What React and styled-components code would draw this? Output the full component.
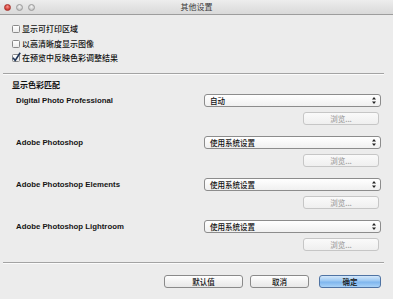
import React from "react";
import styled, { createGlobalStyle } from "styled-components";

const Global = createGlobalStyle`
  html, body { margin: 0; padding: 0; background: #ececec; }
  * { box-sizing: border-box; }
`;

const Window = styled.div`
  width: 393px;
  height: 299px;
  background: #ececec;
  display: flex;
  flex-direction: column;
  font-family: "Noto Sans CJK SC", "Liberation Sans", sans-serif;
  font-weight: 500;
  color: #111;
  overflow: hidden;
`;

const TitleBar = styled.div`
  height: 15px;
  flex: none;
  display: grid;
  grid-template-columns: 1fr auto 1fr;
  align-items: center;
  background: linear-gradient(#ededed, #d9d9d9);
  border-bottom: 1px solid #9d9d9d;
`;

const Lights = styled.div`
  display: flex;
  gap: 5px;
  padding-left: 4px;
`;

const Light = styled.span`
  width: 7px;
  height: 7px;
  border-radius: 50%;
  border: 1px solid ${(p) => (p.$red ? "#a8322c" : "#9a9a9a")};
  background: ${(p) =>
    p.$red
      ? "radial-gradient(circle at 50% 35%, #f59a93, #d9423a 60%, #b62c25)"
      : "radial-gradient(circle at 50% 35%, #f4f4f4, #cfcfcf 60%, #b9b9b9)"};
`;

const Title = styled.div`
  font-size: 8px;
  line-height: 14px;
  font-weight: 400;
  color: #3a3a3a;
`;

const Checks = styled.div`
  padding: 7px 12px 0;
  display: flex;
  flex-direction: column;
`;

const CheckRow = styled.label`
  height: 14.5px;
  display: flex;
  align-items: center;
  gap: 2px;
  font-size: 8px;
  line-height: 10px;
`;

const Box = styled.span`
  width: 8px;
  height: 8px;
  flex: none;
  border: 1px solid #8a8a8a;
  border-radius: 1.5px;
  background: linear-gradient(#ffffff, #ececec);
  display: flex;
  align-items: center;
  justify-content: center;
  overflow: visible;
`;

const Separator = styled.div`
  height: 2px;
  flex: none;
  border-top: 1px solid #a3a3a3;
  border-bottom: 1px solid #fbfbfb;
  margin: ${(p) => p.$mt}px 9px 0 3px;
`;

const SectionTitle = styled.div`
  font-size: 8px;
  line-height: 12px;
  font-weight: 700;
  padding-left: 12px;
  margin-top: 4px;
`;

const Apps = styled.div`
  display: flex;
  flex-direction: column;
  gap: 11px;
  padding: 0 12px;
  margin-top: 3px;
`;

const AppRow = styled.div`
  display: grid;
  grid-template-columns: 1fr 177px;
  align-items: start;
`;

const AppLabel = styled.div`
  font-family: "Liberation Sans", Arial, sans-serif;
  font-weight: 700;
  font-size: 7.8px;
  line-height: 13px;
  padding-left: 4px;
  color: #151515;
`;

const Controls = styled.div`
  display: flex;
  flex-direction: column;
  align-items: flex-end;
  gap: 5px;
`;

const Select = styled.div`
  width: 177px;
  height: 13px;
  border: 1px solid #8c8c8c;
  border-radius: 3px;
  background: linear-gradient(#ffffff, #f0f0f0);
  display: flex;
  align-items: center;
  justify-content: space-between;
  padding: 0 4px 0 5px;
  font-size: 7.5px;
  line-height: 11px;
`;

const Browse = styled.div`
  width: 76px;
  height: 13px;
  margin-right: 2px;
  border: 1px solid #c6c6c6;
  border-radius: 3px;
  background: linear-gradient(#fafafa, #efefef);
  color: #a5a5a5;
  font-size: 7.5px;
  line-height: 11px;
  text-align: center;
`;

const Footer = styled.div`
  display: flex;
  justify-content: flex-end;
  gap: 7px;
  padding: 0 12px;
  margin-top: 11px;
`;

const Button = styled.div`
  width: ${(p) => p.$w}px;
  height: 13px;
  margin-left: ${(p) => p.$ml || 0}px;
  border: 1px solid ${(p) => (p.$primary ? "#4f73a3" : "#8a8a8a")};
  border-radius: 3px;
  background: ${(p) =>
    p.$primary
      ? "linear-gradient(#d3e7fa, #9cc8f2 45%, #7fb6ee 55%, #a9d2f7)"
      : "linear-gradient(#ffffff, #f2f2f2 50%, #e8e8e8)"};
  font-size: 7.5px;
  line-height: 11px;
  text-align: center;
  color: #111;
`;

const Arrows = () => (
  <svg width="4" height="7" viewBox="0 0 4 7">
    <path d="M2 0 L4 2.6 L0 2.6 Z M2 7 L4 4.4 L0 4.4 Z" fill="#222" />
  </svg>
);

const Check = () => (
  <svg width="8" height="8" viewBox="0 0 8 8" style={{ overflow: "visible" }}>
    <path d="M1 3.8 L3.2 6.5 L8.2 -1.2" fill="none" stroke="#1f3558" strokeWidth="1.6" />
  </svg>
);

const apps = [
  { name: "Digital Photo Professional", value: "自动" },
  { name: "Adobe Photoshop", value: "使用系统设置" },
  { name: "Adobe Photoshop Elements", value: "使用系统设置" },
  { name: "Adobe Photoshop Lightroom", value: "使用系统设置" },
];

const checks = [
  { text: "显示可打印区域", on: false },
  { text: "以高清晰度显示图像", on: false },
  { text: "在预览中反映色彩调整结果", on: true },
];

export default function App() {
  return (
    <>
      <Global />
      <Window>
        <TitleBar>
          <Lights>
            <Light $red />
            <Light />
            <Light />
          </Lights>
          <Title>其他设置</Title>
          <div />
        </TitleBar>
        <Checks>
          {checks.map((c) => (
            <CheckRow key={c.text}>
              <Box>{c.on && <Check />}</Box>
              {c.text}
            </CheckRow>
          ))}
        </Checks>
        <Separator $mt={7} />
        <SectionTitle>显示色彩匹配</SectionTitle>
        <Apps>
          {apps.map((a) => (
            <AppRow key={a.name}>
              <AppLabel>{a.name}</AppLabel>
              <Controls>
                <Select>
                  <span>{a.value}</span>
                  <Arrows />
                </Select>
                <Browse>浏览...</Browse>
              </Controls>
            </AppRow>
          ))}
        </Apps>
        <Separator $mt={11} />
        <Footer>
          <Button $w={79}>默认值</Button>
          <Button $w={59}>取消</Button>
          <Button $w={62} $ml={3} $primary>
            确定
          </Button>
        </Footer>
      </Window>
    </>
  );
}
